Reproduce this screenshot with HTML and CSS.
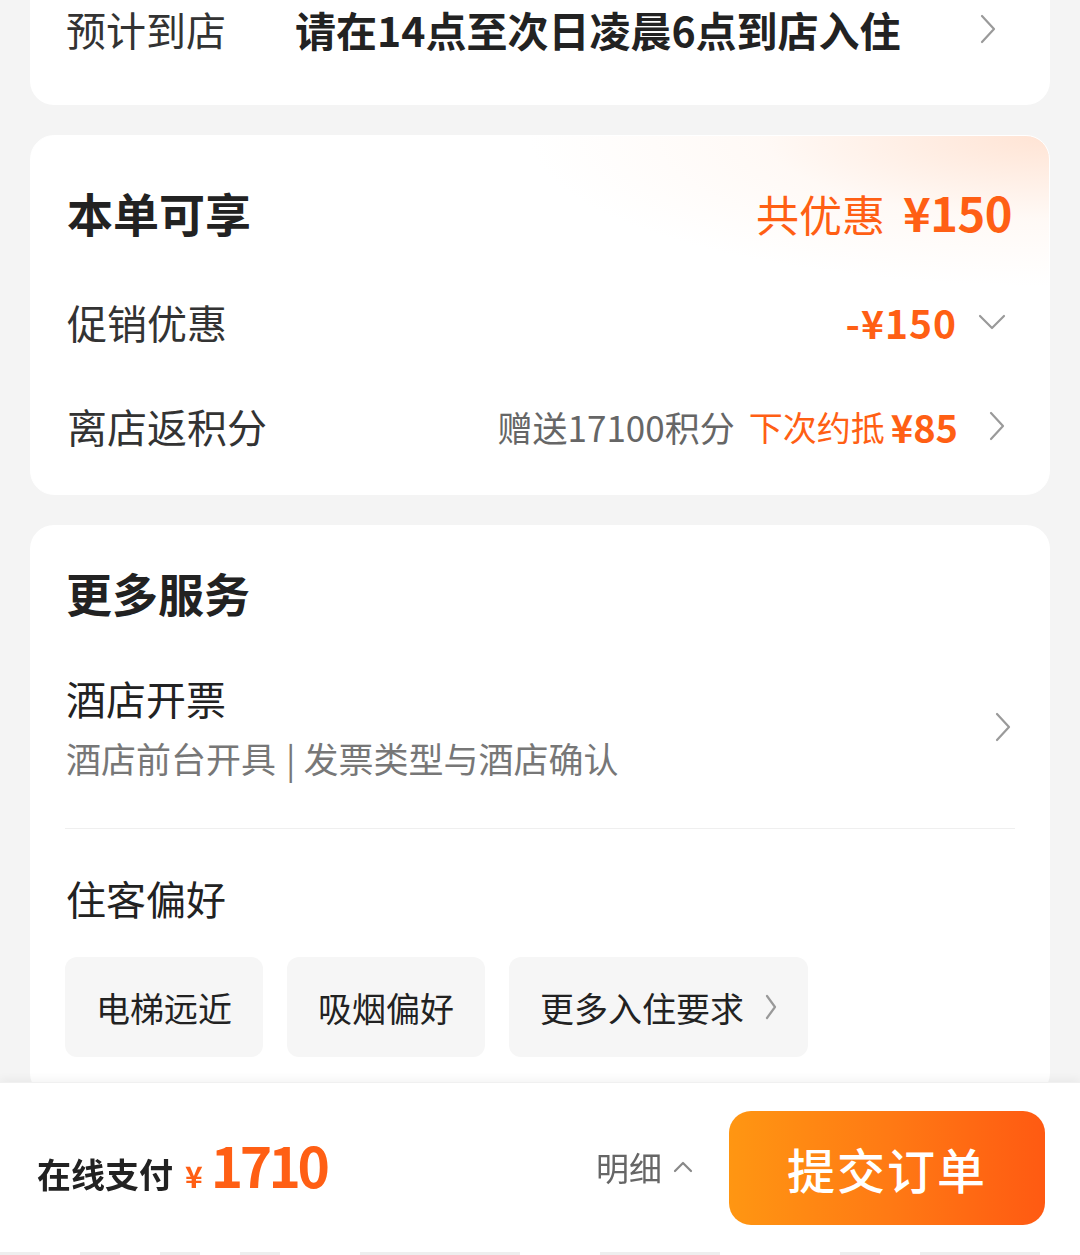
FILE: index.html
```html
<!DOCTYPE html>
<html lang="zh-CN">
<head>
<meta charset="utf-8">
<title>填写订单</title>
<link rel="stylesheet" href="styles.css">
</head>
<body>
<main class="page">
  <section class="card card-arrival">
    <div class="arrival-row">
      <span class="arrival-label">预计到店</span>
      <span class="arrival-value">请在14点至次日凌晨6点到店入住</span>
      <svg class="chev chev-right chev-arrival" viewBox="0 0 16 30" aria-hidden="true"><path d="M2 2 L14 15 L2 28"/></svg>
    </div>
  </section>

  <section class="card card-offer">
    <div class="offer-head">
      <h2 class="card-title">本单可享</h2>
      <div class="offer-total"><span class="ot-label">共优惠</span><span class="ot-amount">¥150</span></div>
    </div>
    <div class="row">
      <span class="row-label">促销优惠</span>
      <span class="row-right">
        <span class="promo-amount">-¥150</span>
        <svg class="chev chev-down" viewBox="0 0 28 16" aria-hidden="true"><path d="M2 2 L14 14 L26 2"/></svg>
      </span>
    </div>
    <div class="row">
      <span class="row-label">离店返积分</span>
      <span class="row-right">
        <span class="points-grey">赠送17100积分</span>
        <span class="points-orange">下次约抵</span>
        <span class="points-amount">¥85</span>
        <svg class="chev chev-right chev-points" viewBox="0 0 16 30" aria-hidden="true"><path d="M2 2 L14 15 L2 28"/></svg>
      </span>
    </div>
  </section>

  <section class="card card-service">
    <h2 class="card-title service-title">更多服务</h2>
    <div class="invoice">
      <div class="invoice-text">
        <div class="invoice-title">酒店开票</div>
        <div class="invoice-sub">酒店前台开具<span class="sep">|</span>发票类型与酒店确认</div>
      </div>
      <svg class="chev chev-right chev-invoice" viewBox="0 0 16 30" aria-hidden="true"><path d="M2 2 L14 15 L2 28"/></svg>
    </div>
    <div class="prefs">
      <div class="prefs-title">住客偏好</div>
      <div class="chips">
        <span class="chip">电梯远近</span>
        <span class="chip">吸烟偏好</span>
        <span class="chip chip-more">更多入住要求<svg class="chev chev-chip" viewBox="0 0 12 26" aria-hidden="true"><path d="M2 2 L10 13 L2 24"/></svg></span>
      </div>
    </div>
  </section>
</main>

<footer class="paybar">
  <div class="pay-info">
    <span class="pay-label">在线支付</span>
    <span class="pay-yen">¥</span>
    <span class="pay-amount">1710</span>
  </div>
  <div class="pay-actions">
    <span class="detail">明细<svg class="chev chev-up" viewBox="0 0 20 12" aria-hidden="true"><path d="M2 10 L10 2 L18 10"/></svg></span>
    <button class="submit" type="button">提交订单</button>
  </div>
  <div class="dashes">
    <i class="d1"></i><i class="d2"></i><i class="d3"></i><i class="d4"></i><i class="d5"></i><i class="d6"></i><i class="d7"></i><i class="d8"></i>
  </div>
</footer>
</body>
</html>
```

FILE: styles.css
```css
* { box-sizing: border-box; }
html, body { margin: 0; padding: 0; }
body {
  background: #f4f4f4;
  font-family: "Noto Sans CJK SC", "Noto Sans", sans-serif;
  color: #222;
  width: 1080px;
  overflow: hidden;
}
.page {
  padding: 0 30px 200px;
  display: flex;
  flex-direction: column;
  gap: 30px;
}
.card {
  background: #fff;
  border-radius: 24px;
  padding: 0 35px;
}
.chev { fill: none; stroke: #9a9a9a; stroke-width: 2.2; stroke-linecap: round; stroke-linejoin: round; flex: none; }

/* arrival */
.card-arrival {
  border-radius: 0 0 24px 24px;
  padding-bottom: 47px;
}
.arrival-row {
  height: 58px;
  display: flex;
  align-items: center;
}
.arrival-label {
  font-size: 40px;
  color: #333;
  width: 230px;
  flex: none;
  padding-left: 1px;
}
.arrival-value {
  font-size: 41px;
  font-weight: 700;
  color: #222;
  flex: 1;
}
.chev-arrival { width: 16px; height: 30px; margin-right: 19px; }

/* offer */
.card-offer {
  padding-top: 41px;
  padding-bottom: 16px;
  padding-right: 37px;
  background:
    radial-gradient(ellipse 520px 150px at 100% 0%, rgba(255, 216, 194, 0.7), rgba(255, 236, 224, 0.3) 55%, rgba(255, 255, 255, 0) 100%),
    #fff;
  border: 1px solid #fff;
}
.offer-head {
  height: 80px;
  display: flex;
  align-items: baseline;
  justify-content: space-between;
  margin-bottom: 13px;
}
.card-title {
  margin: 0;
  font-size: 46px;
  font-weight: 700;
  color: #222;
  line-height: 60px;
  padding-left: 1px;
}
.offer-head .card-title { margin-top: -3px; }
.offer-total { color: #ff5f14; display: flex; align-items: baseline; }
.ot-label { font-size: 43px; }
.ot-amount { font-size: 47px; font-weight: 700; margin-left: 18px; letter-spacing: -0.5px; }
.row {
  height: 104px;
  display: flex;
  align-items: center;
  justify-content: space-between;
}
.row-label { font-size: 40px; color: #333; padding-left: 1px; }
.row-right { display: flex; align-items: center; }
.promo-amount {
  color: #ff5f14;
  font-size: 39px;
  font-weight: 700;
  letter-spacing: 1px;
}
.chev-down { width: 28px; height: 16px; margin-left: 21px; margin-right: 6px; }
.points-grey { font-size: 35px; color: #666; }
.points-orange { font-size: 34px; color: #ff5f14; margin-left: 14px; }
.points-amount { font-size: 38px; font-weight: 700; color: #ff5f14; margin-left: 6px; }
.chev-points { width: 16px; height: 30px; margin-left: 31px; margin-right: 7px; }

/* service */
.card-service {
  padding-top: 37px;
}
.service-title { line-height: 60px; }
.invoice {
  display: flex;
  align-items: center;
  padding: 50px 0 46px;
  border-bottom: 1px solid #efefef;
}
.invoice-text { flex: 1; padding-left: 1px; }
.invoice-title { font-size: 40px; line-height: 52px; color: #222; }
.invoice-sub { font-size: 35px; line-height: 48px; color: #777; margin-top: 10px; }
.sep { margin: 0 8px 0 10px; }
.chev-invoice { width: 16px; height: 30px; margin-right: 4px; margin-top: 0; }
.prefs { padding: 46px 0 40px; }
.prefs-title { font-size: 40px; line-height: 46px; color: #222; padding-left: 1px; }
.chips {
  margin-top: 36px;
  display: flex;
  gap: 24px;
}
.chip {
  height: 100px;
  padding: 0 31px 0 31px;
  background: #f6f6f6;
  border-radius: 12px;
  display: flex;
  align-items: center;
  font-size: 34px;
  color: #222;
}
.chip-more { padding-right: 31px; }
.chev-chip { width: 12px; height: 26px; margin-left: 21px; stroke: #999; }

/* pay bar */
.paybar {
  position: fixed;
  left: 0;
  right: 0;
  bottom: 0;
  height: 173px;
  background: #fff;
  box-shadow: 0 -4px 8px rgba(0, 0, 0, 0.04);
  border-top: 1px solid #f0f0f0;
  display: flex;
  align-items: center;
  justify-content: space-between;
  padding: 0 35px 0 37px;
}
.pay-info { display: flex; align-items: baseline; margin-top: -4px; }
.pay-label { font-size: 34px; font-weight: 700; color: #222; }
.pay-yen { font-size: 30px; font-weight: 700; color: #ff5f14; margin-left: 12px; }
.pay-amount { font-size: 55px; font-weight: 700; color: #ff5f14; margin-left: 8px; letter-spacing: -3.5px; line-height: 1; }
.pay-actions { display: flex; align-items: center; }
.detail {
  font-size: 33px;
  color: #666;
  display: flex;
  align-items: center;
  margin-right: 36px;
  margin-top: -4px;
}
.chev-up { width: 20px; height: 12px; margin-left: 11px; stroke: #888; }
.submit {
  width: 316px;
  height: 114px;
  border: 0;
  border-radius: 22px;
  background: linear-gradient(90deg, #ff9612 0%, #ff7a14 50%, #ff5a12 100%);
  color: #fff;
  font-family: "Noto Sans CJK SC", "Noto Sans", sans-serif;
  font-size: 48px;
  font-weight: 500;
  letter-spacing: 2px;
  padding: 0;
  margin-top: -2px;
}
.dashes {
  position: absolute;
  left: 0;
  right: 0;
  bottom: 0;
  height: 3px;
  display: flex;
}
.dashes i { display: block; height: 3px; background: #eeeeee; }
.d1 { width: 40px; }
.d2 { width: 40px; margin-left: 40px; }
.d3 { width: 40px; margin-left: 40px; }
.d4 { width: 40px; margin-left: 40px; }
.d5 { width: 160px; margin-left: 80px; }
.d6 { width: 120px; margin-left: 80px; }
.d7 { width: 40px; margin-left: 120px; }
.d8 { width: 120px; margin-left: 40px; }
```
